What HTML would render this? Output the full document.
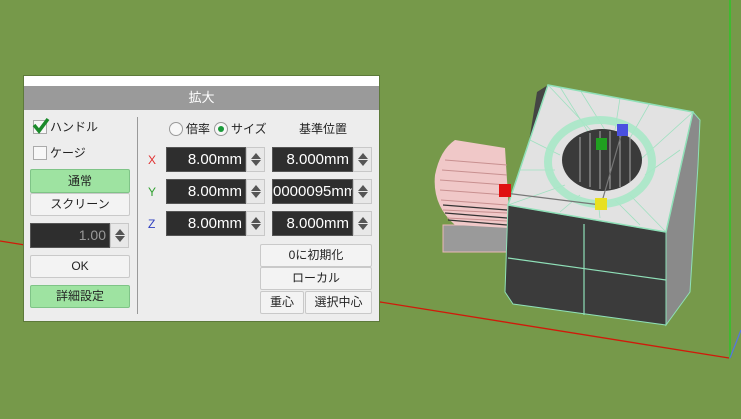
<!DOCTYPE html>
<html><head><meta charset="utf-8"><style>
*{margin:0;padding:0;box-sizing:border-box}
body{width:741px;height:419px;overflow:hidden;background:#76994a;position:relative;font-family:"Liberation Sans","Noto Sans CJK JP",sans-serif}
.a{position:absolute}
#dlg{left:23px;top:75px;width:357px;height:247px;background:#ededed;border:1px solid #5d7a3a}
.btn{position:absolute;background:#f3f3f3;border:1px solid #c9c9c9;border-radius:2px;font-size:12px;color:#222;text-align:center}
.g{background:#9ee3a1;border-color:#7fc487}
.fld{position:absolute;background:#2e2e2e;color:#fff;font-size:15px;text-align:right;padding-right:3px;border:1px solid #555;overflow:hidden;white-space:nowrap}
.sp{position:absolute;width:19px;background:#e8e8e8;border:1px solid #c8c8c8}
.sp:before{content:"";position:absolute;left:4px;top:5px;border:5px solid transparent;border-top:0;border-bottom:6px solid #555}
.sp:after{content:"";position:absolute;left:4px;bottom:5px;border:5px solid transparent;border-bottom:0;border-top:6px solid #555}
.t{position:absolute;font-size:12px;color:#222;line-height:14px}
</style></head><body>
<svg class="a" style="left:0;top:0" width="741" height="419">
<line x1="0" y1="241" x2="729" y2="358" stroke="#d01a0a" stroke-width="1.3"/>
<line x1="730" y1="0" x2="730" y2="358" stroke="#22cc22" stroke-width="1.3"/>
<line x1="730" y1="358" x2="741" y2="330" stroke="#5577dd" stroke-width="1.3"/>
<rect x="443" y="225" width="65" height="27" fill="#9a9a9a" stroke="#e9b8b8"/>
<path d="M455,140 L505,148 L510,228 L455,225 Q432,205 435,175 Q440,150 455,140Z" fill="#f0c8c8"/>
<g stroke="#c89090" stroke-width="1">
<line x1="445" y1="160" x2="507" y2="165"/><line x1="442" y1="170" x2="507" y2="175"/><line x1="440" y1="180" x2="507" y2="185"/><line x1="440" y1="190" x2="507" y2="195"/><line x1="441" y1="200" x2="507" y2="205"/><line x1="443" y1="210" x2="507" y2="213"/><line x1="447" y1="218" x2="507" y2="221"/>
</g>
<g stroke="#333" stroke-width="1.2"><line x1="443" y1="205" x2="507" y2="210"/><line x1="445" y1="213" x2="507" y2="218"/><line x1="448" y1="220" x2="507" y2="225"/></g>
<path d="M537,92 L548,85 L508,205 L505,290Z" fill="#444"/>
<path d="M693,112 L700,120 L698,165 L690,292 L666,325 L666,232Z" fill="#8a8a8a" stroke="#8fe0b8"/>
<path d="M508,205 L666,232 L666,325 L513,304 L505,292Z" fill="#3b3b3b" stroke="#8fe0b8"/>
<path d="M548,85 L693,112 L666,232 L508,205Z" fill="#e2e2e2" stroke="#8fe0b8" stroke-width="1.5"/>
<g stroke="#8fe0b8" stroke-width="0.8" opacity="0.8">
<line x1="548" y1="85" x2="600" y2="140"/><line x1="560" y1="87" x2="590" y2="135"/><line x1="580" y1="90" x2="605" y2="130"/><line x1="620" y1="98" x2="615" y2="130"/><line x1="650" y1="103" x2="630" y2="138"/><line x1="693" y1="112" x2="640" y2="160"/><line x1="680" y1="150" x2="645" y2="175"/><line x1="666" y1="232" x2="630" y2="195"/><line x1="640" y1="225" x2="615" y2="200"/><line x1="600" y1="218" x2="598" y2="200"/><line x1="560" y1="212" x2="580" y2="195"/><line x1="508" y1="205" x2="565" y2="185"/><line x1="520" y1="170" x2="555" y2="170"/><line x1="530" y1="140" x2="560" y2="155"/>
</g>
<ellipse cx="600" cy="162" rx="52" ry="42" fill="none" stroke="#a8e8c8" stroke-width="8" opacity="0.9"/>
<ellipse cx="602" cy="160" rx="40" ry="31" fill="#3a3a3a"/>
<g stroke="#aaa" stroke-width="1"><line x1="580" y1="137" x2="580" y2="182"/><line x1="590" y1="133" x2="590" y2="187"/><line x1="600" y1="131" x2="600" y2="189"/><line x1="610" y1="131" x2="610" y2="189"/><line x1="620" y1="133" x2="620" y2="187"/><line x1="630" y1="137" x2="630" y2="182"/></g>
<g stroke="#8fe0b8" stroke-width="1.2" fill="none"><line x1="584" y1="224" x2="584" y2="315"/><line x1="508" y1="258" x2="666" y2="280"/></g>
<line x1="505" y1="193" x2="601" y2="205" stroke="#777" stroke-width="1.2"/>
<line x1="601" y1="205" x2="622" y2="132" stroke="#777" stroke-width="1.2"/>
<rect x="499" y="184" width="12" height="13" fill="#e01010"/>
<rect x="595" y="198" width="12" height="12" fill="#e8e020"/>
<rect x="596" y="138" width="11" height="12" fill="#20a020"/>
<rect x="617" y="124" width="11" height="12" fill="#4a50e0"/>
</svg>
<div id="dlg" class="a">
<div class="a" style="left:0;top:0;width:355px;height:10px;background:#fff"></div>
<div class="a" style="left:0;top:10px;width:355px;height:24px;background:#9a9a9a;color:#fff;font-size:13px;text-align:center;line-height:24px">拡大</div>
<div class="a" style="left:9px;top:44px;width:14px;height:14px;border:1px solid #aaa;background:#f7f7f7"></div>
<svg class="a" style="left:8px;top:40px" width="18" height="18"><path d="M2,9 L7,15 L16,3" fill="none" stroke="#1a8a2a" stroke-width="3.5"/></svg>
<div class="t" style="left:26px;top:44px">ハンドル</div>
<div class="a" style="left:9px;top:70px;width:14px;height:14px;border:1px solid #aaa;background:#f7f7f7"></div>
<div class="t" style="left:26px;top:70px">ケージ</div>
<div class="btn g" style="left:6px;top:93px;width:100px;height:24px;line-height:22px">通常</div>
<div class="btn" style="left:6px;top:117px;width:100px;height:23px;line-height:21px">スクリーン</div>
<div class="fld" style="left:6px;top:147px;width:80px;height:25px;line-height:23px;color:#999;font-size:14px">1.00</div>
<div class="sp" style="left:86px;top:147px;height:25px"></div>
<div class="btn" style="left:6px;top:179px;width:100px;height:23px;line-height:21px">OK</div>
<div class="btn g" style="left:6px;top:209px;width:100px;height:23px;line-height:21px">詳細設定</div>
<div class="a" style="left:113px;top:41px;width:1px;height:197px;background:#999"></div>
<div class="a" style="left:145px;top:46px;width:14px;height:14px;border:1px solid #999;border-radius:50%;background:#f7f7f7"></div>
<div class="t" style="left:162px;top:46px">倍率</div>
<div class="a" style="left:190px;top:46px;width:14px;height:14px;border:1px solid #999;border-radius:50%;background:#f7f7f7"></div>
<div class="a" style="left:194px;top:50px;width:6px;height:6px;border-radius:50%;background:#1a9a3a"></div>
<div class="t" style="left:207px;top:46px">サイズ</div>
<div class="t" style="left:275px;top:46px">基準位置</div>
<div class="t" style="left:124px;top:77px;color:#e03030">X</div>
<div class="t" style="left:124px;top:109px;color:#30a030">Y</div>
<div class="t" style="left:124px;top:141px;color:#3040c0">Z</div>
<div class="fld" style="left:142px;top:71px;width:80px;height:25px;line-height:23px">8.00mm</div><div class="sp" style="left:222px;top:71px;height:25px"></div>
<div class="fld" style="left:248px;top:71px;width:81px;height:25px;line-height:23px">8.000mm</div><div class="sp" style="left:329px;top:71px;height:25px"></div>
<div class="fld" style="left:142px;top:103px;width:80px;height:25px;line-height:23px">8.00mm</div><div class="sp" style="left:222px;top:103px;height:25px"></div>
<div class="fld" style="left:248px;top:103px;width:81px;height:25px;line-height:23px">0000095mm</div><div class="sp" style="left:329px;top:103px;height:25px"></div>
<div class="fld" style="left:142px;top:135px;width:80px;height:25px;line-height:23px">8.00mm</div><div class="sp" style="left:222px;top:135px;height:25px"></div>
<div class="fld" style="left:248px;top:135px;width:81px;height:25px;line-height:23px">8.000mm</div><div class="sp" style="left:329px;top:135px;height:25px"></div>
<div class="btn" style="left:236px;top:168px;width:112px;height:23px;line-height:21px">0に初期化</div>
<div class="btn" style="left:236px;top:191px;width:112px;height:23px;line-height:21px">ローカル</div>
<div class="btn" style="left:236px;top:215px;width:44px;height:23px;line-height:21px">重心</div>
<div class="btn" style="left:281px;top:215px;width:67px;height:23px;line-height:21px">選択中心</div>
</div>
</body></html>
